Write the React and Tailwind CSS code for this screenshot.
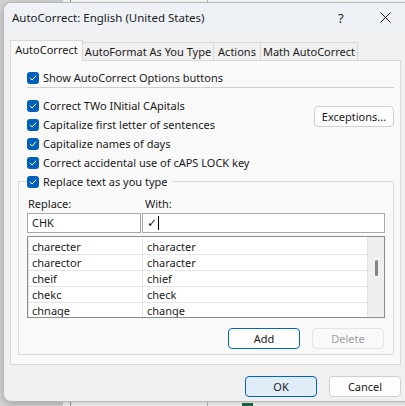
import React from 'react';

const pairs = [
  ['charecter', 'character'],
  ['charector', 'character'],
  ['cheif', 'chief'],
  ['chekc', 'check'],
  ['chnage', 'change'],
];

function Check() {
  return (
    <span className="flex h-[12px] w-[12px] shrink-0 items-center justify-center rounded-[3px] bg-[#005fb8]">
      <svg width="8" height="8" viewBox="0 0 8 8" fill="none">
        <path d="M1.2 4.2 L3.1 6 L6.8 2" stroke="white" strokeWidth="1" strokeLinecap="round" strokeLinejoin="round" />
      </svg>
    </span>
  );
}

function CheckRow({ label }) {
  return (
    <div className="flex h-[19px] items-center gap-[4px] whitespace-nowrap">
      <Check />
      <span>{label}</span>
    </div>
  );
}

function App() {
  return (
    <div className="relative h-[406px] w-[405px] overflow-hidden bg-white font-['Noto_Sans',sans-serif] text-[11px] leading-[14px] text-[#1a1a1a]">
      {/* sheet behind the dialog */}
      <div className="absolute left-0 top-0 h-full w-[63px] bg-[#d6d6d6]" />
      <div className="absolute left-[70px] top-0 h-full w-px bg-[#9a9a9a]" />
      <div className="absolute left-[207px] top-0 h-full w-px bg-[#c4c4c4]" />
      <div className="absolute left-[242px] top-[403px] h-[6px] w-[11px] bg-[#1e7145]" />

      {/* dialog window */}
      <div className="absolute left-[3px] top-[2px] flex h-[400px] w-[412px] flex-col overflow-hidden rounded-[8px] border border-[#b9b9b9] bg-[#f0f0f0] shadow-[0_2px_8px_rgba(0,0,0,0.25)]">
        <div className="flex h-[29px] shrink-0 items-center whitespace-nowrap bg-[#eef2f7] pl-[8px]">
          <span className="w-[326px] text-[11.5px]">AutoCorrect: English (United States)</span>
          <span className="text-[13px]">?</span>
          <svg className="ml-[36px]" width="11" height="11" viewBox="0 0 11 11">
            <path d="M0.5 0.5 L10.5 10.5 M10.5 0.5 L0.5 10.5" stroke="#1a1a1a" strokeWidth="1" />
          </svg>
        </div>

        {/* tabs */}
        <div className="relative z-10 -mb-px ml-[6px] mt-[8px] flex items-end whitespace-nowrap">
          <div className="flex h-[21px] w-[73px] items-center justify-center border border-b-0 border-[#d9d9d9] bg-[#f9f9f9] pb-[2px]">
            AutoCorrect
          </div>
          <div className="flex h-[19px] w-[131px] items-center justify-center border border-l-0 border-[#d9d9d9] bg-[#f0f0f0]">
            AutoFormat As You Type
          </div>
          <div className="flex h-[19px] w-[47px] items-center justify-center border border-l-0 border-[#d9d9d9] bg-[#f0f0f0]">
            Actions
          </div>
          <div className="flex h-[19px] w-[97px] items-center justify-center border border-l-0 border-[#d9d9d9] bg-[#f0f0f0]">
            Math AutoCorrect
          </div>
        </div>

        {/* tab panel */}
        <div className="ml-[6px] flex h-[305px] w-[391px] flex-col border border-[#d9d9d9] bg-[#f9f9f9] pl-[16px]">
          <div className="mt-[7px]">
            <CheckRow label="Show AutoCorrect Options buttons" />
          </div>
          <div className="mr-[6px] h-px bg-[#cfcfcf]" />

          <div className="mt-[8px] flex">
            <div className="flex flex-col">
              <CheckRow label="Correct TWo INitial CApitals" />
              <CheckRow label="Capitalize first letter of sentences" />
              <CheckRow label="Capitalize names of days" />
              <CheckRow label="Correct accidental use of cAPS LOCK key" />
            </div>
            <button className="ml-auto mr-[6px] mt-[10px] h-[21px] w-[80px] rounded-[4px] border border-[#d0d0d0] bg-[#fdfdfd] text-[#1a1a1a]">
              Exceptions...
            </button>
          </div>

          <fieldset className="-ml-[9px] w-[376px] border border-[#dcdcdc] px-[8px] pb-[5px]">
            <legend className="pr-[4px]">
              <CheckRow label="Replace text as you type" />
            </legend>
            <div className="mt-[6px] flex h-[14px]">
              <span className="w-[118px] pl-[1px]">Replace:</span>
              <span>With:</span>
            </div>
            <div className="mt-[2px] flex gap-px">
              <div className="flex h-[20px] w-[114px] items-center border border-[#a8a8a8] bg-white pl-[4px]">CHK</div>
              <div className="flex h-[20px] flex-1 items-center border border-[#a8a8a8] bg-white pl-[4px]">
                <span className="font-['DejaVu_Sans',sans-serif] text-[12px]">✓</span>
                <span className="ml-[1px] h-[14px] w-px bg-black" />
              </div>
            </div>

            <div className="mt-[3px] flex h-[82px] overflow-hidden border border-[#8c8c8c] bg-white">
              <div className="flex flex-1 flex-col pt-[2px]">
                {pairs.map(([from, to]) => (
                  <div key={from} className="flex h-[16px] shrink-0 border-b border-[#e6e6e6]">
                    <div className="flex w-[115px] items-center border-l border-r border-[#e6e6e6] pl-[3px]">{from}</div>
                    <div className="flex flex-1 items-center pl-[4px]">{to}</div>
                  </div>
                ))}
              </div>
              <div className="flex w-[17px] shrink-0 justify-center border-l border-[#e2e2e2] bg-[#efefef]">
                <div className="mt-[23px] h-[16px] w-[3px] rounded-full bg-[#858585]" />
              </div>
            </div>

            <div className="mt-[10px] flex justify-end gap-[12px] pr-[1px]">
              <button className="h-[21px] w-[72px] rounded-[4px] border border-[#0067c0] bg-[#fdfdfd] text-[#1a1a1a]">Add</button>
              <button className="h-[21px] w-[72px] rounded-[4px] border border-[#e5e5e5] bg-[#f9f9f9] text-[#a0a0a0]">Delete</button>
            </div>
          </fieldset>
        </div>

        {/* dialog buttons */}
        <div className="mt-[11px] flex gap-[12px] pl-[241px]">
          <button className="h-[21px] w-[72px] rounded-[4px] border border-[#0067c0] bg-[#e0ecf8] text-[#1a1a1a]">OK</button>
          <button className="h-[21px] w-[72px] rounded-[4px] border border-[#d0d0d0] bg-[#fdfdfd] text-[#1a1a1a]">Cancel</button>
        </div>
      </div>
    </div>
  );
}

export default App;
